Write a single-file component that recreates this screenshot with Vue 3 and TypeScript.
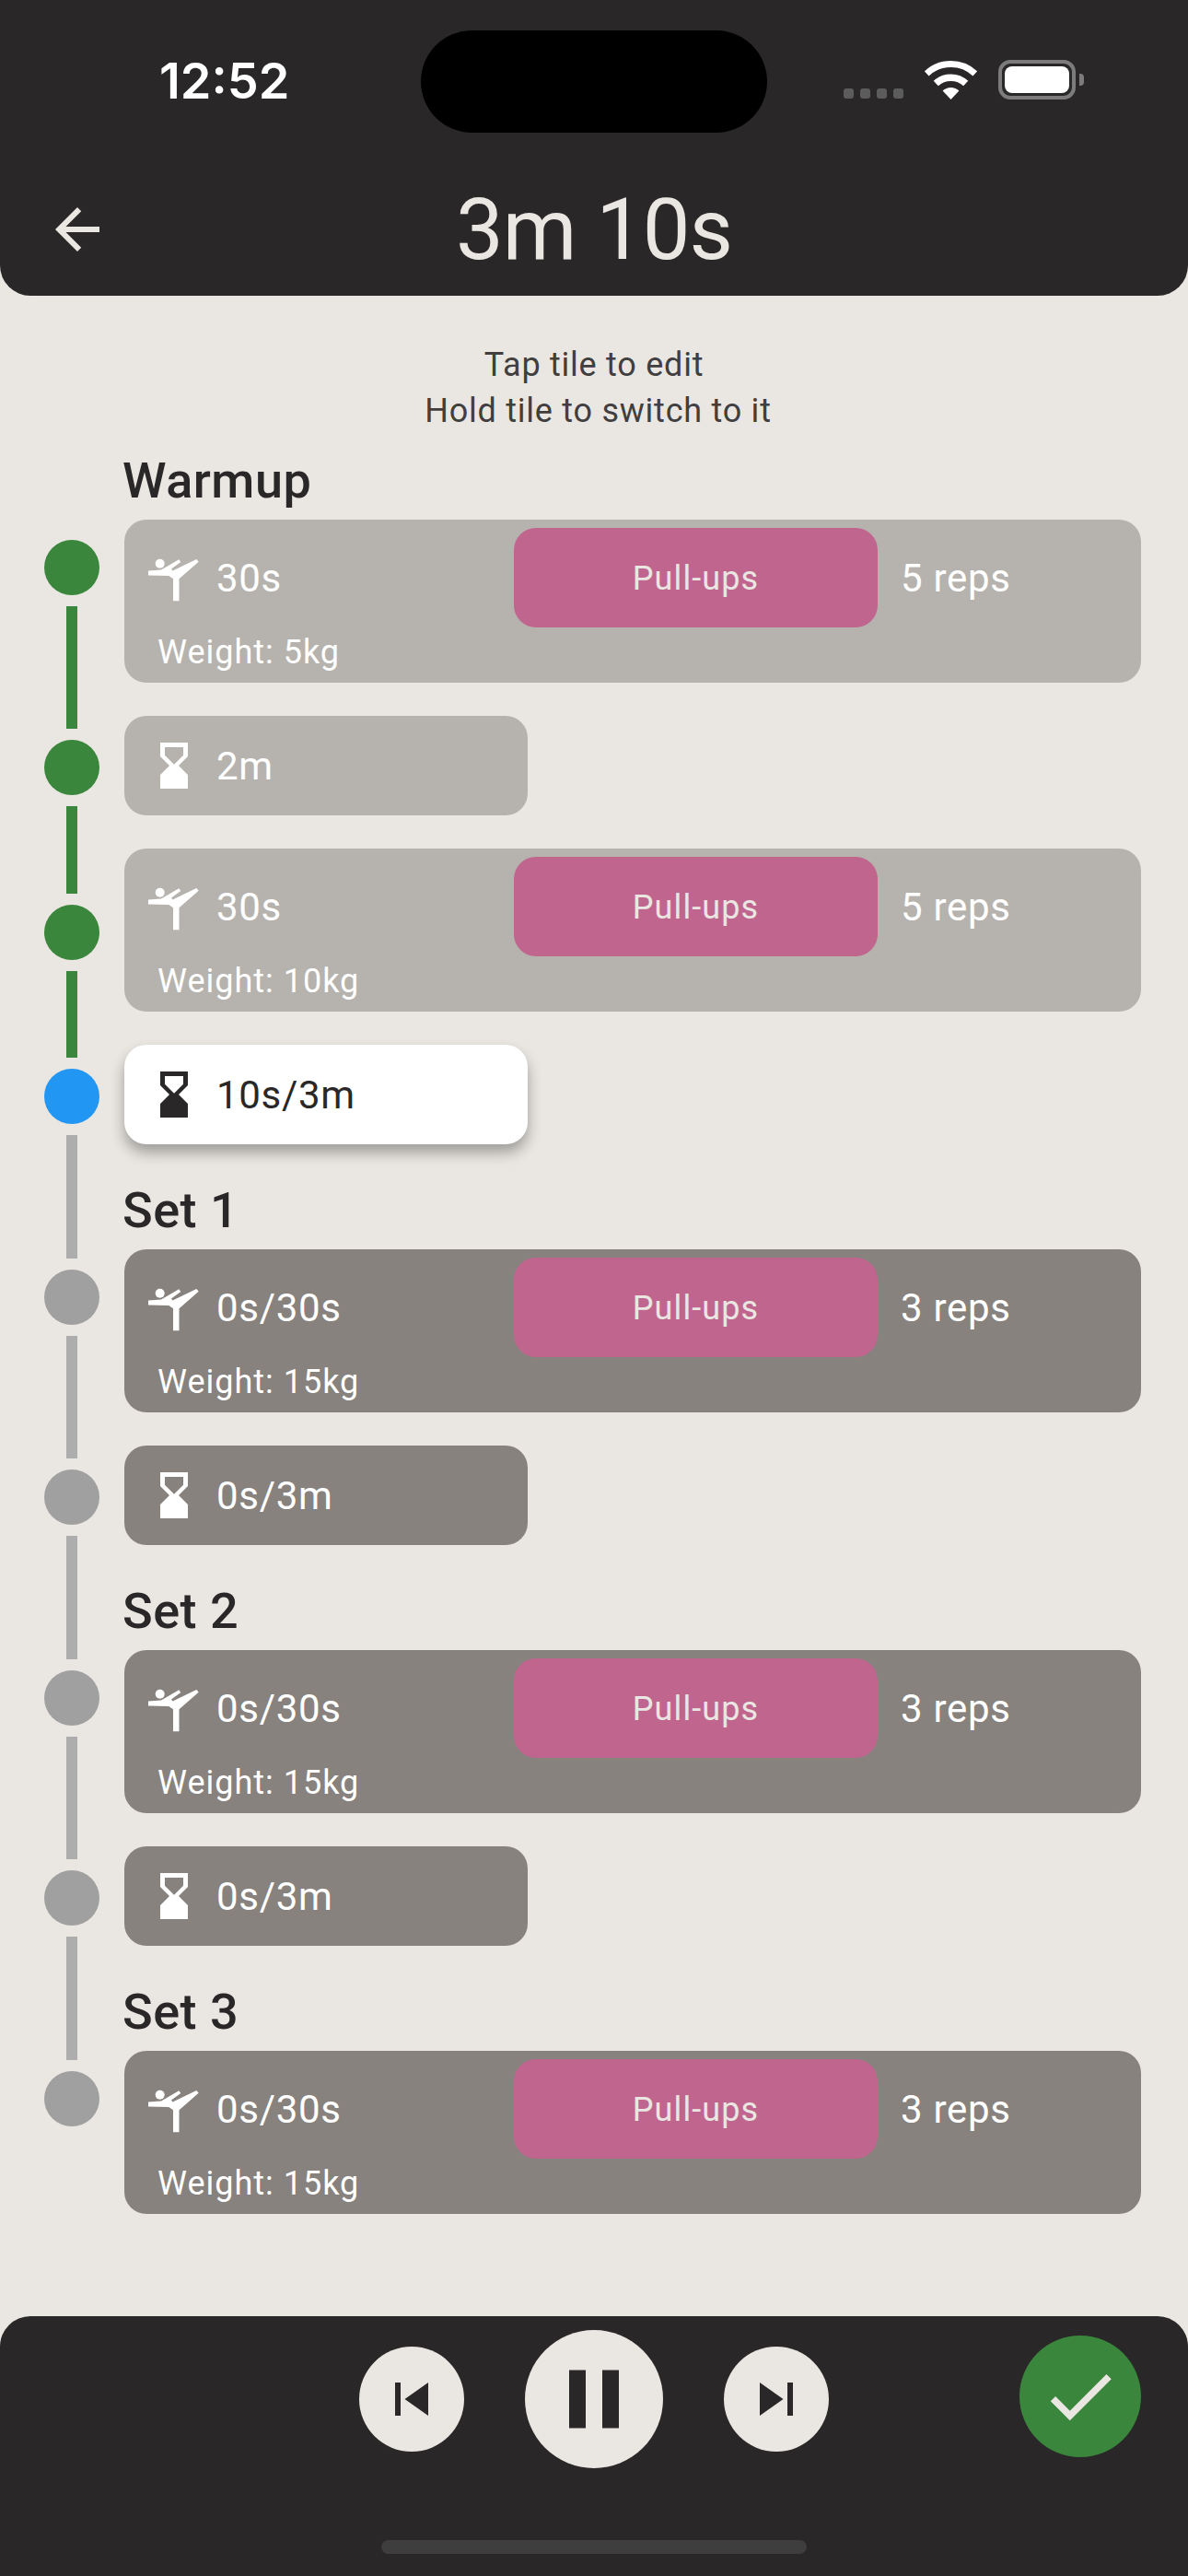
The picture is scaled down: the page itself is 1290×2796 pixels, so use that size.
<script setup lang="ts">
type Status = 'done' | 'active' | 'todo'

interface Step {
  kind: 'exercise' | 'rest'
  status: Status
  time: string
  heading?: string
  reps?: string
  weight?: string
}

const steps: Step[] = [
  { kind: 'exercise', status: 'done', time: '30s', heading: 'Warmup', reps: '5 reps', weight: 'Weight: 5kg' },
  { kind: 'rest', status: 'done', time: '2m' },
  { kind: 'exercise', status: 'done', time: '30s', reps: '5 reps', weight: 'Weight: 10kg' },
  { kind: 'rest', status: 'active', time: '10s/3m' },
  { kind: 'exercise', status: 'todo', time: '0s/30s', heading: 'Set 1', reps: '3 reps', weight: 'Weight: 15kg' },
  { kind: 'rest', status: 'todo', time: '0s/3m' },
  { kind: 'exercise', status: 'todo', time: '0s/30s', heading: 'Set 2', reps: '3 reps', weight: 'Weight: 15kg' },
  { kind: 'rest', status: 'todo', time: '0s/3m' },
  { kind: 'exercise', status: 'todo', time: '0s/30s', heading: 'Set 3', reps: '3 reps', weight: 'Weight: 15kg' },
]

// the stem above a dot takes the colour of the step it leads to
function stemAbove(i: number): string {
  return i === 0 ? 'none' : steps[i].status
}
function stemBelow(i: number): string {
  return i === steps.length - 1 ? 'none' : steps[i + 1].status
}
</script>

<template>
  <div class="screen">
    <header class="top">
      <div class="status-bar">
        <span class="clock">12:52</span>
        <div class="island"></div>
        <div class="status-icons">
          <div class="signal">
            <span v-for="n in 4" :key="n"></span>
          </div>
          <svg class="wifi" width="57" height="42" viewBox="0 0 57 42">
            <path d="M2.2 13.9A38.5 38.5 0 0 1 54.8 13.9" fill="none" stroke="#fff" stroke-width="7" />
            <path d="M12.3 24.6A23.75 23.75 0 0 1 44.7 24.6" fill="none" stroke="#fff" stroke-width="7.5" />
            <path d="M28.5 42L19.6 32.5A13 13 0 0 1 37.4 32.5Z" fill="#fff" />
          </svg>
          <div class="battery">
            <div class="battery__body"><div class="battery__fill"></div></div>
            <div class="battery__nub"></div>
          </div>
        </div>
      </div>
      <div class="nav">
        <svg class="nav__back" width="72" height="72" viewBox="0 0 24 24">
          <path d="M20 11H7.83l5.59-5.59L12 4l-8 8 8 8 1.41-1.41L7.83 13H20v-2z" />
        </svg>
        <h1 class="nav__title">3m 10s</h1>
      </div>
    </header>

    <main class="content">
      <p class="hint">
        <span>Tap tile to edit</span>
        <span class="hint__second">Hold tile to switch to it</span>
      </p>

      <div class="timeline">
        <section v-for="(step, i) in steps" :key="i" class="row">
          <div class="rail">
            <span class="stem stem--top" :class="`stem--${stemAbove(i)}`"></span>
            <span class="dot" :class="`dot--${step.status}`"></span>
            <span class="stem stem--bottom" :class="`stem--${stemBelow(i)}`"></span>
          </div>

          <div class="row__body">
            <h2 v-if="step.heading" class="row__heading">{{ step.heading }}</h2>

            <article v-if="step.kind === 'exercise'" class="tile tile--wide" :class="`tile--${step.status}`">
              <div class="tile__top">
                <div class="tile__left">
                  <svg class="tile__icon" width="60" height="60" viewBox="0 0 60 60">
                    <circle cx="14.7" cy="14.7" r="5" />
                    <polygon points="2,22.5 16,21.5 35.3,10.3 37.3,13 27,20.4 28.5,22.5 54.3,10 56.7,12.7 35.5,31.3 35.5,55.3 29,55.3 29,31.3 24.3,28 2,27.5" />
                  </svg>
                  <span class="tile__time">{{ step.time }}</span>
                </div>
                <div class="tile__exercise">Pull-ups</div>
                <span class="tile__reps">{{ step.reps }}</span>
              </div>
              <div class="tile__weight">{{ step.weight }}</div>
            </article>

            <article v-else class="tile tile--short" :class="`tile--${step.status}`">
              <div class="tile__left">
                <svg class="tile__icon" width="60" height="60" viewBox="0 0 24 24">
                  <path d="M18 22l-.01-6L14 12l3.99-4.01L18 2H6v6l4 4-4 3.99V22h12zM8 7.5V4h8v3.5l-4 4-4-4z" />
                </svg>
                <span class="tile__time">{{ step.time }}</span>
              </div>
            </article>
          </div>
        </section>
      </div>
    </main>

    <footer class="controls">
      <div class="controls__row">
        <div></div>
        <div class="player">
          <button class="round round--small" type="button">
            <svg width="72" height="72" viewBox="0 0 24 24"><path d="M6 6h2v12H6zm3.5 6l8.5 6V6z" /></svg>
          </button>
          <button class="round round--big" type="button">
            <svg width="108" height="108" viewBox="0 0 24 24"><path d="M6 19h4V5H6v14zm8-14v14h4V5h-4z" /></svg>
          </button>
          <button class="round round--small" type="button">
            <svg width="72" height="72" viewBox="0 0 24 24"><path d="M6 18l8.5-6L6 6v12zM16 6v12h2V6h-2z" /></svg>
          </button>
        </div>
        <button class="finish" type="button">
          <svg width="90" height="90" viewBox="0 0 24 24"><path d="M9 16.17L4.83 12l-1.42 1.41L9 19 21 7l-1.41-1.41z" /></svg>
        </button>
      </div>
      <div class="home-bar"></div>
    </footer>
  </div>
</template>

<style scoped>
.screen {
  width: 1290px;
  min-height: 2796px;
  display: flex;
  flex-direction: column;
  background: #eae7e2;
  font-family: Roboto, sans-serif;
  color: #292728;
}

/* header */
.top {
  height: 321px;
  flex-shrink: 0;
  background: #292728;
  border-radius: 0 0 33px 33px;
  box-sizing: border-box;
}

.status-bar {
  position: relative;
  height: 212px;
  box-sizing: border-box;
  padding: 65px 113px 0 173px;
  display: flex;
  justify-content: space-between;
  align-items: flex-start;
}

.clock {
  font-family: Inter, sans-serif;
  font-size: 54px;
  font-weight: 600;
  line-height: 46px;
  color: #fff;
}

.island {
  position: absolute;
  top: 33px;
  left: 457px;
  width: 376px;
  height: 111px;
  border-radius: 56px;
  background: #000;
}

.status-icons {
  display: flex;
  align-items: flex-end;
  gap: 23px;
}

.signal {
  display: flex;
  gap: 7px;
  padding-bottom: 1px;
}

.signal span {
  width: 11px;
  height: 11px;
  border-radius: 3px;
  background: #5c5c5c;
}

.battery {
  display: flex;
  align-items: center;
  gap: 4px;
}

.battery__body {
  width: 84px;
  height: 43px;
  box-sizing: border-box;
  border: 4px solid #7c7c7c;
  border-radius: 13px;
  padding: 3px;
}

.battery__fill {
  height: 100%;
  border-radius: 8px;
  background: #fff;
}

.battery__nub {
  width: 5px;
  height: 13px;
  border-radius: 0 4px 4px 0;
  background: #7c7c7c;
}

.nav {
  display: grid;
  grid-template-columns: 1fr auto 1fr;
  align-items: center;
  padding: 0 48px;
  height: 72px;
}

.nav__back {
  fill: #eae7e2;
}

.nav__title {
  margin: 0;
  padding-top: 2px;
  font-size: 92px;
  font-weight: 450;
  line-height: 72px;
  letter-spacing: -1px;
  color: #eae7e2;
  grid-column: 2;
}

/* list */
.content {
  flex: 1;
  padding-top: 50px;
}

.hint {
  margin: 0 0 -3px;
  text-align: center;
  font-size: 36px;
  line-height: 50px;
  letter-spacing: 0.75px;
  color: #403e3e;
}

.hint span {
  display: block;
}

.hint .hint__second {
  padding-left: 9px;
}

.row {
  display: flex;
  padding: 0 51px 0 48px;
  gap: 27px;
}

.rail {
  width: 60px;
  flex-shrink: 0;
  display: flex;
  flex-direction: column;
  align-items: center;
  gap: 12px;
}

.stem {
  width: 12px;
}

.stem--top {
  flex: 1 1 4px;
}

.stem--bottom {
  flex: 1 1 0;
}

.stem--done,
.stem--active {
  background: #3a863c;
}

.stem--todo {
  background: #adadad;
}

.dot {
  width: 60px;
  height: 60px;
  border-radius: 50%;
  flex-shrink: 0;
}

.dot--done {
  background: #3a863c;
}

.dot--active {
  background: #2196f3;
}

.dot--todo {
  background: #a0a0a0;
}

.row__body {
  flex: 1;
  min-width: 0;
  padding: 18px 0;
}

.row__heading {
  margin: 0 0 0 -2px;
  font-size: 54px;
  font-weight: 500;
  line-height: 72px;
  padding-bottom: 6px;
  letter-spacing: 0.5px;
  color: #292728;
}

.tile {
  border-radius: 24px;
  color: #fff;
}

.tile--done {
  background: #b6b3ae;
}

.tile--todo {
  background: #87827e;
}

.tile--active {
  background: #fff;
  color: #292728;
  box-shadow: 0 9px 15px rgba(0, 0, 0, 0.32);
}

.tile--short {
  width: 438px;
  height: 108px;
  display: flex;
  align-items: center;
}

.tile--wide {
  height: 177px;
  padding-top: 9px;
  box-sizing: border-box;
}

.tile__top {
  display: flex;
  align-items: center;
  height: 108px;
}

.tile__left {
  width: 423px;
  flex-shrink: 0;
  box-sizing: border-box;
  padding-left: 24px;
  display: flex;
  align-items: center;
  gap: 16px;
}

.tile__icon {
  fill: currentColor;
  flex-shrink: 0;
}

.tile__time,
.tile__reps {
  font-size: 42px;
  line-height: 60px;
  letter-spacing: 0.7px;
  padding-top: 2px;
}

.tile__exercise {
  width: 395px;
  height: 108px;
  flex-shrink: 0;
  box-sizing: border-box;
  padding-top: 2px;
  border-radius: 24px;
  background: #c0668e;
  color: #eae7e2;
  display: flex;
  align-items: center;
  justify-content: center;
  font-size: 36px;
  letter-spacing: 1.1px;
}

.tile__reps {
  padding-left: 25px;
}

.tile__weight {
  padding-left: 36px;
  font-size: 36px;
  font-weight: 400;
  line-height: 54px;
  letter-spacing: 1px;
}

/* bottom controls */
.controls {
  height: 282px;
  flex-shrink: 0;
  box-sizing: border-box;
  padding-top: 15px;
  background: #292728;
  border-radius: 33px 33px 0 0;
}

.controls__row {
  display: grid;
  grid-template-columns: 1fr auto 1fr;
  height: 150px;
}

.player {
  display: flex;
  align-items: center;
  gap: 66px;
}

.round {
  padding: 0;
  border: 0;
  border-radius: 50%;
  background: #eae7e2;
  display: flex;
  align-items: center;
  justify-content: center;
  fill: #292728;
}

.round--small {
  width: 114px;
  height: 114px;
}

.round--big {
  width: 150px;
  height: 150px;
}

.finish {
  justify-self: end;
  margin: 6px 51px 0 0;
  width: 132px;
  height: 132px;
  padding: 0;
  border: 0;
  border-radius: 50%;
  background: #3a863c;
  fill: #eae7e2;
  display: flex;
  align-items: center;
  justify-content: center;
}

.home-bar {
  width: 462px;
  height: 15px;
  margin: 78px auto 0;
  border-radius: 8px;
  background: #3e3e3e;
}
</style>
